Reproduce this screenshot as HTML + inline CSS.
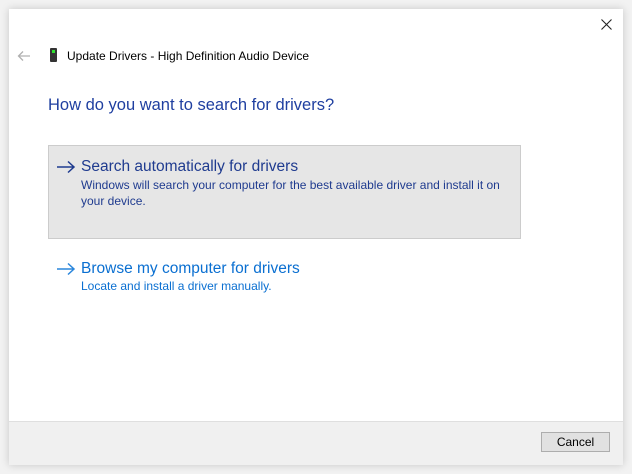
<!DOCTYPE html>
<html><head><style>
body{margin:0;width:632px;height:474px;background:#f2f2f2;position:relative;overflow:hidden;font-family:"Liberation Sans",sans-serif;}
.win{position:absolute;left:9px;top:9px;width:614px;height:456px;background:#fff;box-shadow:0 0 8px rgba(0,0,0,0.18);}
.a{position:absolute;white-space:nowrap;}
.foot{position:absolute;left:0;bottom:0;width:614px;height:43px;background:#f0f0f0;border-top:1px solid #dfdfdf;}
.btn{position:absolute;left:532px;top:10px;width:67px;height:18px;background:#e1e1e1;border:1px solid #adadad;font-size:12px;text-align:center;line-height:18px;color:#000;}
.panel{position:absolute;left:39px;top:136px;width:471px;height:92px;background:#e6e6e6;border:1px solid #ccc;}
</style></head><body>
<div class="win">
<svg class="a" style="left:592px;top:10px" width="11" height="11"><path d="M0.5 0.5L10.5 10.5M10.5 0.5L0.5 10.5" stroke="#222" stroke-width="1.1"/></svg>
<svg class="a" style="left:8px;top:41px" width="14" height="12"><path d="M13 6H2M6 1.5L1.5 6 6 10.5" stroke="#b0b0b0" stroke-width="1.3" fill="none"/></svg>
<div class="a" style="left:41px;top:39px;width:7px;height:14px;background:#333;border-radius:1px"></div>
<div class="a" style="left:43px;top:41px;width:3px;height:3px;background:#2ee02e"></div>
<div class="a" style="left:58px;top:40px;font-size:12px;color:#000;">Update Drivers - High Definition Audio Device</div>
<div class="a" style="left:39px;top:87px;font-size:16.5px;color:#1f3fa0;">How do you want to search for drivers?</div>
<div class="panel"></div>
<svg class="a" style="left:47px;top:151px" width="20" height="14"><path d="M1 7H18M12 1.5L18 7 12 12.5" stroke="#1f3b8f" stroke-width="1.5" fill="none"/></svg>
<div class="a" style="left:72px;top:149px;font-size:15.5px;color:#1f3b8f;">Search automatically for drivers</div>
<div class="a" style="left:72px;top:168px;font-size:12px;line-height:16px;color:#1f3b8f;">Windows will search your computer for the best available driver and install it on<br>your device.</div>
<svg class="a" style="left:47px;top:253px" width="20" height="14"><path d="M1 7H18M12 1.5L18 7 12 12.5" stroke="#2a86dc" stroke-width="1.5" fill="none"/></svg>
<div class="a" style="left:72px;top:251px;font-size:15.5px;color:#0a6fd1;">Browse my computer for drivers</div>
<div class="a" style="left:72px;top:270px;font-size:12px;color:#0a6fd1;">Locate and install a driver manually.</div>
<div class="foot"><div class="btn">Cancel</div></div>
</div>
</body></html>
